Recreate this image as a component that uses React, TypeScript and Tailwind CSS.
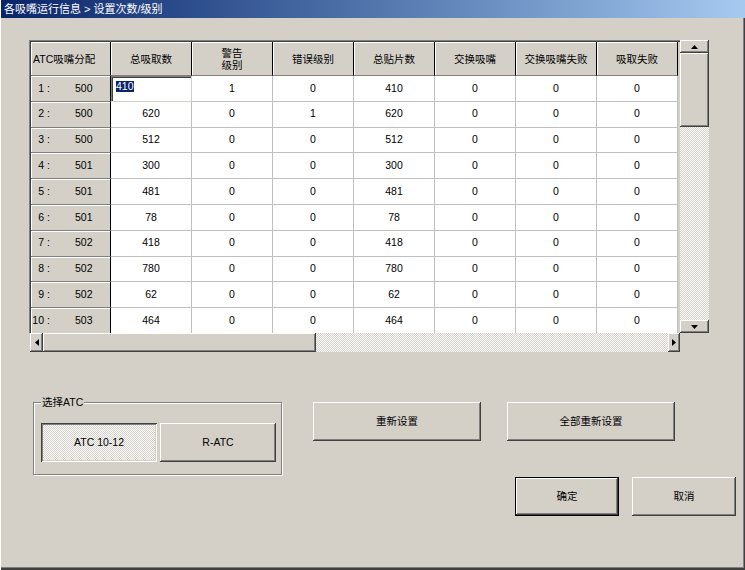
import React from "react";

const font = "font-['Liberation_Sans','Noto_Sans_CJK_SC',sans-serif]";

const raised =
  "bg-[#d4d0c8] shadow-[inset_-1px_-1px_0_#404040,inset_1px_1px_0_#ffffff,inset_-2px_-2px_0_#808080,inset_2px_2px_0_#d4d0c8]";

const checker =
  "bg-[image:repeating-conic-gradient(#ffffff_0%_25%,#d4d0c8_0%_50%)] bg-[length:2px_2px]";

const headers = ["总吸取数", "警告级别", "错误级别", "总贴片数", "交换吸嘴", "交换吸嘴失败", "吸取失败"];

const rows = [
  [1, 500, 410, 1, 0, 410, 0, 0, 0],
  [2, 500, 620, 0, 1, 620, 0, 0, 0],
  [3, 500, 512, 0, 0, 512, 0, 0, 0],
  [4, 501, 300, 0, 0, 300, 0, 0, 0],
  [5, 501, 481, 0, 0, 481, 0, 0, 0],
  [6, 501, 78, 0, 0, 78, 0, 0, 0],
  [7, 502, 418, 0, 0, 418, 0, 0, 0],
  [8, 502, 780, 0, 0, 780, 0, 0, 0],
  [9, 502, 62, 0, 0, 62, 0, 0, 0],
  [10, 503, 464, 0, 0, 464, 0, 0, 0],
];

const Arrow = ({ dir }: { dir: "up" | "down" | "left" | "right" }) => {
  const pts = {
    up: "0,4 7,4 3.5,0",
    down: "0,0 7,0 3.5,4",
    left: "4,0 4,7 0,3.5",
    right: "0,0 0,7 4,3.5",
  }[dir];
  const vertical = dir === "up" || dir === "down";
  return (
    <svg width={vertical ? 7 : 4} height={vertical ? 4 : 7} viewBox={vertical ? "0 0 7 4" : "0 0 4 7"}>
      <polygon points={pts} fill="#000" />
    </svg>
  );
};

const HeadCell = ({ children, left }: { children: React.ReactNode; left?: boolean }) => (
  <div
    className={`flex items-center bg-[#d4d0c8] border-r border-r-black border-b border-b-[#808080] shadow-[inset_1px_1px_0_#ffffff] leading-[12px] ${
      left ? "justify-start pl-[2px]" : "justify-center text-center"
    }`}
  >
    {children}
  </div>
);

const Btn = ({ label, w, def }: { label: string; w: string; def?: boolean }) => (
  <div className={`${w} h-[39px] ${def ? "border border-black" : ""}`}>
    <div className={`w-full h-full flex items-center justify-center ${raised}`}>{label}</div>
  </div>
);

export default function App() {
  return (
    <div
      className={`w-[745px] h-[570px] bg-[#d4d0c8] text-black text-[10.5px] ${font} shadow-[inset_1px_0_0_#ffffff,inset_-1px_-2px_0_#404040,inset_-2px_-3px_0_#808080] overflow-hidden`}
    >
      <div className="h-[18px] ml-[1px] flex items-center pl-[3px] bg-gradient-to-r from-[#0a246a] to-[#a6caf0] text-white text-[11px]">
        各吸嘴运行信息 &gt; 设置次数/级别
      </div>

      <div className="pl-[29px] pt-[22px]">
        <div className="flex">
          <div className="w-[651px] h-[293px] border-l border-t border-[#808080] shadow-[inset_1px_1px_0_#404040] pl-[1px] pt-[1px] bg-[#d4d0c8]">
            <div className="grid grid-cols-[80px_repeat(7,81px)] grid-rows-[34px_repeat(10,25.8px)]">
              <HeadCell left>ATC吸嘴分配</HeadCell>
              {headers.map((h) => (
                <HeadCell key={h}>
                  {h === "警告级别" ? (
                    <span>
                      警告
                      <br />
                      级别
                    </span>
                  ) : (
                    h
                  )}
                </HeadCell>
              ))}
              {rows.map((r, i) => (
                <React.Fragment key={i}>
                  <div className="flex items-center bg-[#d4d0c8] border-r border-r-black border-b border-b-[#808080] shadow-[inset_1px_1px_0_#ffffff]">
                    <span className="w-[13px] text-right">{r[0]}</span>
                    <span className="w-[10px] pl-[3px]">:</span>
                    <span className="pl-[21px]">{r[1]}</span>
                  </div>
                  {r.slice(2).map((v, j) =>
                    i === 0 && j === 0 ? (
                      <div
                        key={j}
                        className="bg-white border-r border-b border-[#d4d0c8] shadow-[inset_1px_1px_0_#808080,inset_2px_2px_0_#404040] pl-[5px] pt-[3px]"
                      >
                        <span className="bg-[#0a246a] text-white leading-[11px] inline-block">{v}</span>
                      </div>
                    ) : (
                      <div
                        key={j}
                        className="bg-white border-r border-b border-[#c0c0c0] flex items-center justify-center"
                      >
                        {v}
                      </div>
                    )
                  )}
                </React.Fragment>
              ))}
            </div>
          </div>

          <div className="w-[29px] h-[293px] flex flex-col">
            <div className={`h-[13px] flex items-center justify-center ${raised}`}>
              <Arrow dir="up" />
            </div>
            <div className={`h-[74px] ${raised}`} />
            <div className={`flex-1 ${checker}`} />
            <div className={`h-[13px] flex items-center justify-center ${raised}`}>
              <Arrow dir="down" />
            </div>
          </div>
        </div>

        <div className="ml-[1px] w-[650px] h-[19px] flex">
          <div className={`w-[13px] flex items-center justify-center ${raised}`}>
            <Arrow dir="left" />
          </div>
          <div className={`w-[273px] ${raised}`} />
          <div className={`flex-1 ${checker}`} />
          <div className={`w-[12px] flex items-center justify-center ${raised}`}>
            <Arrow dir="right" />
          </div>
        </div>

        <div className="flex items-start mt-[50px]">
          <div className="relative ml-[4px] w-[249px] h-[73px] border border-[#808080] shadow-[inset_1px_1px_0_#ffffff,1px_1px_0_#ffffff] pl-[7px] pt-[20px]">
            <span className="absolute -top-[7px] left-[7px] px-[1px] bg-[#d4d0c8] leading-[12px]">选择ATC</span>
            <div className="flex gap-[3px]">
              <div
                className={`w-[116px] h-[39px] flex items-center justify-center ${checker} shadow-[inset_1px_1px_0_#404040,inset_-1px_-1px_0_#ffffff,inset_2px_2px_0_#808080,inset_-2px_-2px_0_#d4d0c8]`}
              >
                ATC 10-12
              </div>
              <Btn label="R-ATC" w="w-[116px]" />
            </div>
          </div>
          <div className="ml-[31px] flex gap-[26px]">
            <Btn label="重新设置" w="w-[168px]" />
            <Btn label="全部重新设置" w="w-[168px]" />
          </div>
        </div>

        <div className="flex mt-[2px] ml-[486px] gap-[13px]">
          <Btn label="确定" w="w-[104px]" def />
          <Btn label="取消" w="w-[104px]" />
        </div>
      </div>
    </div>
  );
}
